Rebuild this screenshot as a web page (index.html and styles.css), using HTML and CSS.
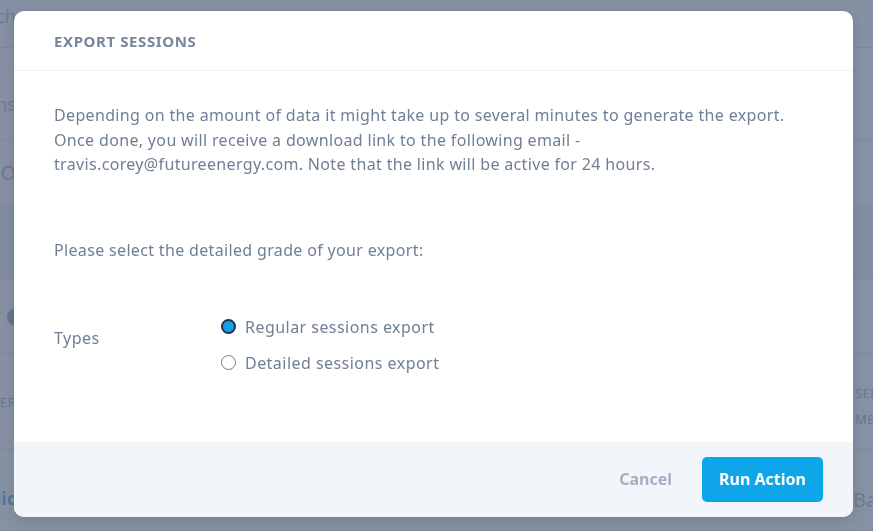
FILE: index.html
```html
<!DOCTYPE html>
<html lang="en">
<head>
<meta charset="utf-8">
<title>Export Sessions</title>
<link rel="stylesheet" href="styles.css">
</head>
<body>
<div class="page">
  <div class="bg-row row-search">
    <div class="edge-l"><span class="muted">Search</span></div>
    <div class="edge-r"></div>
  </div>
  <div class="bg-row row-b">
    <div class="edge-l"><span class="muted">Sessions</span></div>
    <div class="edge-r"></div>
  </div>
  <div class="bg-row row-c">
    <div class="edge-l"><span class="dim big">INFO</span></div>
    <div class="edge-r"></div>
  </div>
  <div class="bg-row row-d">
    <div class="edge-l"></div>
    <div class="edge-r"></div>
  </div>
  <div class="bg-row row-e">
    <div class="edge-l"><span class="chip">×</span></div>
    <div class="edge-r"></div>
  </div>
  <div class="bg-row row-f">
    <div class="edge-l"><span class="th">CHARGER</span></div>
    <div class="edge-r"><span class="th th2">SELECTED<br>METER</span></div>
  </div>
  <div class="bg-row row-g">
    <div class="edge-l"><span class="link">Public</span></div>
    <div class="edge-r"><span class="muted big">Balance</span></div>
  </div>
</div>

<div class="overlay">
  <div class="modal">
    <div class="modal-head">
      <h2 class="modal-title">Export Sessions</h2>
    </div>
    <div class="modal-body">
      <p class="intro">Depending on the amount of data it might take up to several minutes to generate the export. Once done, you will receive a download link to the following email - travis.corey@futureenergy.com. Note that the link will be active for 24 hours.</p>
      <p class="prompt">Please select the detailed grade of your export:</p>
      <div class="field">
        <div class="field-label">Types</div>
        <div class="options">
          <label class="option"><span class="radio checked"></span><span>Regular sessions export</span></label>
          <label class="option"><span class="radio"></span><span>Detailed sessions export</span></label>
        </div>
      </div>
    </div>
    <div class="modal-foot">
      <button class="btn-cancel" type="button">Cancel</button>
      <button class="btn-run" type="button">Run Action</button>
    </div>
  </div>
</div>
</body>
</html>
```
FILE: styles.css
```css
* { box-sizing: border-box; }
html, body { margin: 0; height: 100%; }
body {
  font-family: "Noto Sans", "Open Sans", sans-serif;
  background: #f7f9fb;
  overflow: hidden;
}

/* background page (seen through the overlay) */
.page { display: flex; flex-direction: column; height: 100%; }
.bg-row {
  display: flex;
  justify-content: space-between;
  border-bottom: 1px solid #d4dbe4;
  background: #ffffff;
}
.edge-l, .edge-r {
  width: 16px;
  overflow: hidden;
  display: flex;
  align-items: center;
  white-space: nowrap;
}
.edge-l { justify-content: flex-end; }
.edge-r { justify-content: flex-start; }
.row-search { height: 48px; align-items: flex-start; background: #f7f9fb; }
.row-search .edge-l { padding-top: 4px; }
.row-b { height: 92px; }
.row-b .edge-l { align-items: flex-start; padding-top: 44px; }
.row-c { height: 66px; }
.row-d { height: 74px; background: #e9edf2; }
.row-e { height: 74px; }
.row-f { height: 96px; }
.row-g { flex: 1; align-items: flex-start; }
.row-g .edge-l, .row-g .edge-r { padding-top: 36px; }
.row-f .edge-r { width: 20px; padding-top: 8px; }
.row-g .edge-r { width: 20px; }
.muted { color: #97a3b3; font-size: 18px; }
.dim { color: #8a96a8; }
.big { font-size: 20px; }
.chip {
  display: inline-flex; align-items: center; justify-content: center;
  width: 18px; height: 18px; border-radius: 50%;
  background: #7d889a; color: #fff; font-size: 12px; line-height: 1;
  margin-right: -9px;
}
.th { color: #8793a5; font-size: 13px; letter-spacing: 0.5px; }
.th2 { line-height: 26px; padding-left: 2px; }
.link { color: #1f8fd0; font-weight: 700; font-size: 18px; }

/* overlay & modal */
.overlay {
  position: fixed;
  inset: 0;
  background: rgba(97, 111, 135, 0.76);
}
.modal {
  position: absolute;
  left: 14px;
  top: 11px;
  width: 839px;
  background: #ffffff;
  border-radius: 10px;
  overflow: hidden;
  box-shadow: 0 4px 14px rgba(40, 50, 70, 0.18);
  color: #6f7f95;
}
.modal-head {
  height: 60px;
  display: flex;
  align-items: center;
  padding: 0 40px;
  border-bottom: 1px solid #eef1f5;
}
.modal-title {
  margin: 0;
  font-size: 15px;
  font-weight: 700;
  letter-spacing: 0.6px;
  text-transform: uppercase;
  color: #77859b;
}
.modal-body {
  padding: 32px 40px 67px;
  font-size: 16px;
  line-height: 24.5px;
  letter-spacing: 0.34px;
}
.intro { margin: 0; }
.prompt { margin: 61px 0 0; line-height: 24px; }
.field {
  margin-top: 53px;
  display: grid;
  grid-template-columns: 167px 1fr;
  line-height: 24px;
}
.field-label { padding-top: 11px; letter-spacing: 0.5px; }
.options { display: flex; flex-direction: column; gap: 12px; }
.option { display: flex; align-items: center; gap: 9px; letter-spacing: 0.46px; }
.radio {
  width: 15px; height: 15px;
  border-radius: 50%;
  border: 1px solid #7a7a7a;
  background: #fff;
  flex: none;
}
.radio.checked {
  border: 2px solid #1c3450;
  background: #15a0e3;
}
.modal-foot {
  height: 75px;
  background: #f2f5f9;
  display: flex;
  align-items: center;
  justify-content: flex-end;
  gap: 30px;
  padding: 0 30px;
}
button { font-family: inherit; cursor: pointer; border: 0; }
.btn-cancel {
  background: transparent;
  color: #a4b0c0;
  font-size: 16px;
  font-weight: 700;
  padding: 0;
}
.btn-run {
  height: 45px;
  padding: 0 17px;
  border-radius: 5px;
  background: #0fa6e9;
  color: #ffffff;
  font-size: 16px;
  font-weight: 700;
}
```
